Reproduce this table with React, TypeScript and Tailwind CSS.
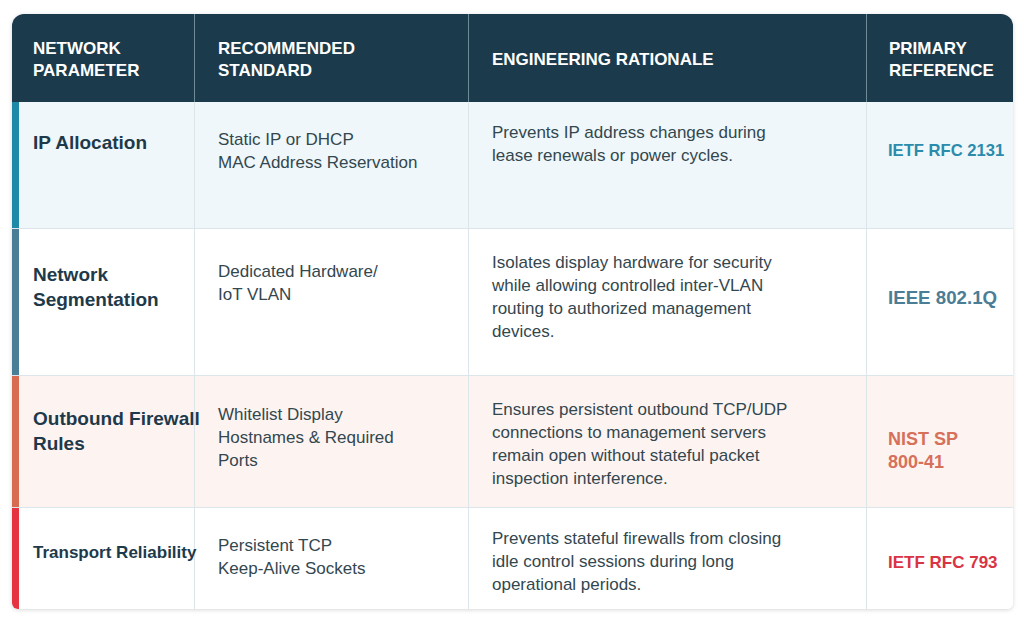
const headers = [
  ["NETWORK", "PARAMETER"],
  ["RECOMMENDED", "STANDARD"],
  ["ENGINEERING RATIONALE"],
  ["PRIMARY", "REFERENCE"],
];

interface Row {
  label: string[];
  standard: string[];
  rationale: string[];
  reference: string[];
  rowClass: string;
  accent: string;
  labelClass: string;
  standardClass: string;
  rationaleClass: string;
  refClass: string;
}

const rows: Row[] = [
  {
    label: ["IP Allocation"],
    standard: ["Static IP or DHCP", "MAC Address Reservation"],
    rationale: ["Prevents IP address changes during", "lease renewals or power cycles."],
    reference: ["IETF RFC 2131"],
    rowClass: "h-[127px] bg-[#eff7fa] border-b border-[#dce5ea]",
    accent: "border-l-[#1e88a9]",
    labelClass: "pt-[28px] text-[19px] leading-[25px]",
    standardClass: "pt-[26px]",
    rationaleClass: "pt-[19px]",
    refClass: "pt-[37px] text-[16.6px] leading-[23px] text-[#2a8bab]",
  },
  {
    label: ["Network", "Segmentation"],
    standard: ["Dedicated Hardware/", "IoT VLAN"],
    rationale: [
      "Isolates display hardware for security",
      "while allowing controlled inter-VLAN",
      "routing to authorized management",
      "devices.",
    ],
    reference: ["IEEE 802.1Q"],
    rowClass: "h-[147px] bg-white border-b border-[#dce5ea]",
    accent: "border-l-[#4a7e97]",
    labelClass: "pt-[33px] text-[19px] leading-[25px]",
    standardClass: "pt-[31px]",
    rationaleClass: "pt-[22px]",
    refClass: "pt-[57px] text-[18.7px] leading-[24px] text-[#4b7d95]",
  },
  {
    label: ["Outbound Firewall", "Rules"],
    standard: ["Whitelist Display", "Hostnames & Required", "Ports"],
    rationale: [
      "Ensures persistent outbound TCP/UDP",
      "connections to management servers",
      "remain open without stateful packet",
      "inspection interference.",
    ],
    reference: ["NIST SP", "800-41"],
    rowClass: "h-[132px] bg-[#fdf4f2] border-b border-[#dce5ea]",
    accent: "border-l-[#d76b51]",
    labelClass: "pt-[30px] text-[19px] leading-[25px]",
    standardClass: "pt-[27px]",
    rationaleClass: "pt-[22px]",
    refClass: "pt-[52px] text-[18px] leading-[23px] text-[#d6705a]",
  },
  {
    label: ["Transport Reliability"],
    standard: ["Persistent TCP", "Keep-Alive Sockets"],
    rationale: [
      "Prevents stateful firewalls from closing",
      "idle control sessions during long",
      "operational periods.",
    ],
    reference: ["IETF RFC 793"],
    rowClass: "h-[101px] bg-white",
    accent: "border-l-[#e5333f]",
    labelClass: "pt-[33px] text-[17px] leading-[24px]",
    standardClass: "pt-[26px]",
    rationaleClass: "pt-[19px]",
    refClass: "pt-[43px] text-[17px] leading-[23px] text-[#d93344]",
  },
];

const Lines = ({ lines }: { lines: string[] }) => (
  <>
    {lines.map((l, i) => (
      <div key={i} className="whitespace-nowrap">
        {l}
      </div>
    ))}
  </>
);

const cols = "grid grid-cols-[183px_274px_398px_146px]";

const App = () => {
  return (
    <div className="min-h-[622px] bg-white pt-[14px] pl-[12px] font-['Liberation_Sans',Arial,sans-serif]">
      <div className="w-[1001px] rounded-t-[12px] rounded-b-[6px] overflow-hidden shadow-[0_1px_4px_rgba(0,0,0,0.16)]">
        {/* header */}
        <div className={`${cols} h-[88px] bg-[#1b3a4b] text-white font-bold text-[17px] leading-[21.5px]`}>
          {headers.map((h, i) => (
            <div
              key={i}
              className={
                i === 0
                  ? "flex flex-col justify-center pt-[3px] pl-[21px] border-r border-[#6f8b98]"
                  : i < 3
                  ? "flex flex-col justify-center pt-[3px] pl-[23px] border-r border-[#6f8b98]"
                  : "flex flex-col justify-center pt-[3px] pl-[22px]"
              }
            >
              <Lines lines={h} />
            </div>
          ))}
        </div>

        {/* body rows */}
        {rows.map((r, i) => (
          <div key={i} className={`${cols} ${r.rowClass}`}>
            <div className={`border-l-[7px] ${r.accent} pl-[14px] border-r border-r-[#dce5ea] font-bold text-[#1e3a4a] ${r.labelClass}`}>
              <Lines lines={r.label} />
            </div>
            <div className={`pl-[23px] border-r border-[#dce5ea] text-[17px] leading-[23px] text-[#33474f] ${r.standardClass}`}>
              <Lines lines={r.standard} />
            </div>
            <div className={`pl-[23px] border-r border-[#dce5ea] text-[17px] leading-[23px] text-[#33474f] ${r.rationaleClass}`}>
              <Lines lines={r.rationale} />
            </div>
            <div className={`pl-[21px] font-bold ${r.refClass}`}>
              <Lines lines={r.reference} />
            </div>
          </div>
        ))}
      </div>
    </div>
  );
};

export default App;
